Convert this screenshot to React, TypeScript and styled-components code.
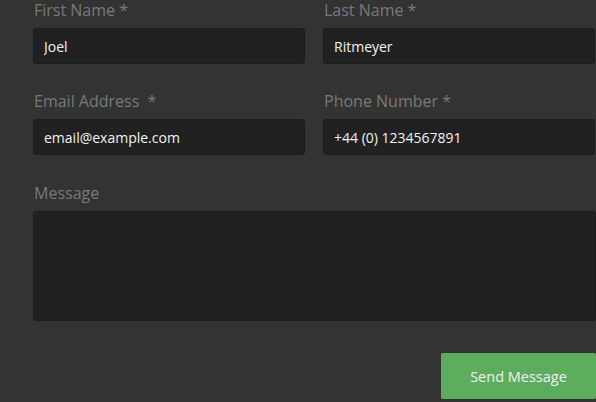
import React from 'react';
import styled, { createGlobalStyle } from 'styled-components';

const GlobalStyle = createGlobalStyle`
  html, body {
    margin: 0;
    padding: 0;
    background: #333333;
    font-family: 'Open Sans', 'Noto Sans', sans-serif;
    overflow: hidden;
  }
`;

const Form = styled.form`
  width: 563px;
  margin-left: 33px;
  display: flex;
  flex-direction: column;
`;

const Row = styled.div<{ $gap: number }>`
  display: grid;
  grid-template-columns: 272px 272px;
  column-gap: 18px;
  margin-bottom: ${(p) => p.$gap}px;
`;

const Field = styled.div`
  display: flex;
  flex-direction: column;
`;

const Label = styled.label`
  font-size: 16px;
  line-height: 20px;
  color: #797979;
  margin-bottom: 8px;
  padding-left: 1px;
  white-space: pre;
`;

const Input = styled.input`
  box-sizing: border-box;
  height: 36px;
  width: 100%;
  padding: 0 10px;
  background: #212121;
  border: 1px solid #1c1c1c;
  border-radius: 3px;
  color: #f2f2f2;
  font-family: 'Open Sans', 'Noto Sans', sans-serif;
  font-size: 14px;
  outline: none;
`;

const TextArea = styled.textarea`
  box-sizing: border-box;
  height: 110px;
  width: 100%;
  padding: 8px 10px;
  background: #212121;
  border: 1px solid #1c1c1c;
  border-radius: 3px;
  color: #f2f2f2;
  font-family: 'Open Sans', 'Noto Sans', sans-serif;
  font-size: 14px;
  resize: none;
  outline: none;
`;

const Actions = styled.div`
  display: flex;
  justify-content: flex-end;
  margin-top: 32px;
`;

const SendButton = styled.button`
  height: 46px;
  width: 155px;
  background: #5dad5f;
  border: none;
  border-radius: 2px;
  color: #f0f0f0;
  font-family: 'Open Sans', 'Noto Sans', sans-serif;
  font-size: 14.5px;
  cursor: pointer;
`;

export default function App() {
  return (
    <>
      <GlobalStyle />
      <Form onSubmit={(e) => e.preventDefault()}>
        <Row $gap={27}>
          <Field>
            <Label>First Name *</Label>
            <Input defaultValue="Joel" />
          </Field>
          <Field>
            <Label>Last Name *</Label>
            <Input defaultValue="Ritmeyer" />
          </Field>
        </Row>
        <Row $gap={28}>
          <Field>
            <Label>{'Email Address  *'}</Label>
            <Input defaultValue="email@example.com" />
          </Field>
          <Field>
            <Label>Phone Number *</Label>
            <Input defaultValue="+44 (0) 1234567891" />
          </Field>
        </Row>
        <Field>
          <Label>Message</Label>
          <TextArea />
        </Field>
        <Actions>
          <SendButton type="submit">Send Message</SendButton>
        </Actions>
      </Form>
    </>
  );
}
